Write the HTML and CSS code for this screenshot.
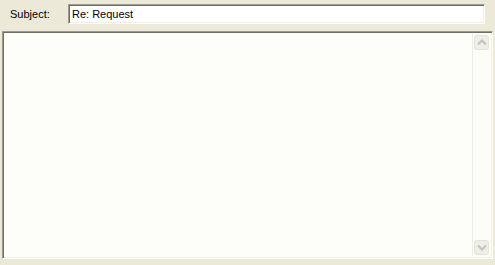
FILE: index.html
```html
<!DOCTYPE html>
<html>
<head>
<meta charset="utf-8">
<link rel="stylesheet" href="styles.css">
</head>
<body>
<div class="form">
  <div class="subject-row">
    <span class="label">Subject:</span>
    <div class="input">Re: Request</div>
  </div>
  <div class="body-box">
    <div class="body-area"></div>
    <div class="scrollbar">
      <div class="sbtn"><svg width="10" height="7" viewBox="0 0 10 7"><polyline points="1,5.5 5,1.5 9,5.5" fill="none" stroke="#C6C5BB" stroke-width="2.2"/></svg></div>
      <div class="track"></div>
      <div class="sbtn"><svg width="10" height="7" viewBox="0 0 10 7"><polyline points="1,1.5 5,5.5 9,1.5" fill="none" stroke="#C6C5BB" stroke-width="2.2"/></svg></div>
    </div>
  </div>
</div>
</body>
</html>
```

FILE: styles.css
```css
html, body {
  margin: 0;
  padding: 0;
  background: #ECE9D8;
  width: 495px;
  height: 265px;
  overflow: hidden;
}
.form {
  display: flex;
  flex-direction: column;
  padding: 4px 2px 0 2px;
  font-family: "Liberation Sans", Arial, sans-serif;
  font-size: 11px;
  color: #000;
}
.subject-row {
  display: flex;
  align-items: center;
  height: 20px;
}
.label {
  margin-left: 8px;
  width: 58px;
}
.input {
  box-sizing: border-box;
  width: 417px;
  height: 20px;
  background: #fff;
  border: 1px solid;
  border-color: #9C9A91 #FFFFFF #FFFFFF #9C9A91;
  box-shadow: inset 1px 1px 0 #716F64, inset -1px -1px 0 #F1EFE2;
  padding: 3px 0 0 3px;
  line-height: 12px;
}
.body-box {
  box-sizing: border-box;
  margin-top: 7px;
  width: 491px;
  height: 228px;
  display: flex;
  border: 1px solid;
  border-color: #9C9A91 #FFFFFF #FFFFFF #9C9A91;
  box-shadow: inset 1px 1px 0 #716F64, inset -1px -1px 0 #F1EFE2;
  padding: 2px 2px 2px 2px;
  background: #FDFEF9;
}
.body-area {
  flex: 1;
}
.scrollbar {
  width: 17px;
  display: flex;
  flex-direction: column;
  border-left: 1px solid #EEEDE5;
  background: #FDFDF8;
}
.track {
  flex: 1;
}
.sbtn {
  box-sizing: border-box;
  width: 15px;
  height: 15px;
  margin: 1px 0 2px 1px;
  border: 1px solid #E4E3DA;
  border-radius: 3px;
  background: #EFEEE7;
  display: flex;
  align-items: center;
  justify-content: center;
}
.sbtn:last-child {
  margin: 2px 0 1px 1px;
}
```
